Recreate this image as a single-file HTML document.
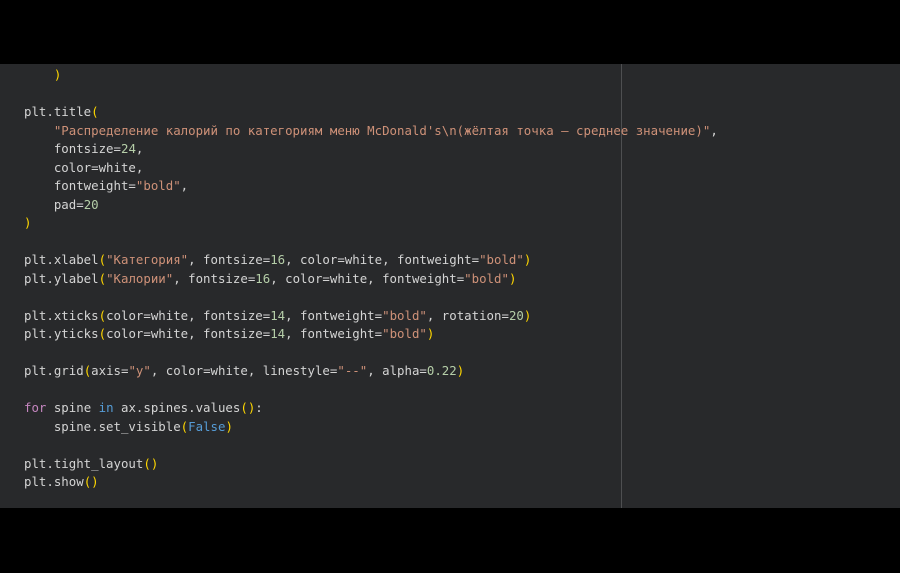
<!DOCTYPE html>
<html><head><meta charset="utf-8"><style>
body{margin:0;width:900px;height:573px;background:#000;overflow:hidden;position:relative}
.ed{position:absolute;left:0;top:64px;width:900px;height:444px;background:#28292b}
.vl{position:absolute;left:621px;top:64px;width:1px;height:444px;background:#4e4f51}
pre{position:absolute;left:24px;top:66px;margin:0;font-family:"DejaVu Sans Mono","Liberation Mono",monospace;font-size:12.4px;line-height:18.5px;color:#d4d4d4}
.s{color:#ce9178}.n{color:#b5cea8}.p{color:#ffd700}.k{color:#c586c0}.b{color:#569cd6}
</style></head><body>
<div class="ed"></div><div class="vl"></div>
<pre>    <span class="p">)</span>

plt.title<span class="p">(</span>
    <span class="s">"Распределение калорий по категориям меню McDonald's\n(жёлтая точка — среднее значение)"</span>,
    fontsize=<span class="n">24</span>,
    color=white,
    fontweight=<span class="s">"bold"</span>,
    pad=<span class="n">20</span>
<span class="p">)</span>

plt.xlabel<span class="p">(</span><span class="s">"Категория"</span>, fontsize=<span class="n">16</span>, color=white, fontweight=<span class="s">"bold"</span><span class="p">)</span>
plt.ylabel<span class="p">(</span><span class="s">"Калории"</span>, fontsize=<span class="n">16</span>, color=white, fontweight=<span class="s">"bold"</span><span class="p">)</span>

plt.xticks<span class="p">(</span>color=white, fontsize=<span class="n">14</span>, fontweight=<span class="s">"bold"</span>, rotation=<span class="n">20</span><span class="p">)</span>
plt.yticks<span class="p">(</span>color=white, fontsize=<span class="n">14</span>, fontweight=<span class="s">"bold"</span><span class="p">)</span>

plt.grid<span class="p">(</span>axis=<span class="s">"y"</span>, color=white, linestyle=<span class="s">"--"</span>, alpha=<span class="n">0.22</span><span class="p">)</span>

<span class="k">for</span> spine <span class="b">in</span> ax.spines.values<span class="p">()</span>:
    spine.set_visible<span class="p">(</span><span class="b">False</span><span class="p">)</span>

plt.tight_layout<span class="p">()</span>
plt.show<span class="p">()</span>
</pre>
</body></html>
